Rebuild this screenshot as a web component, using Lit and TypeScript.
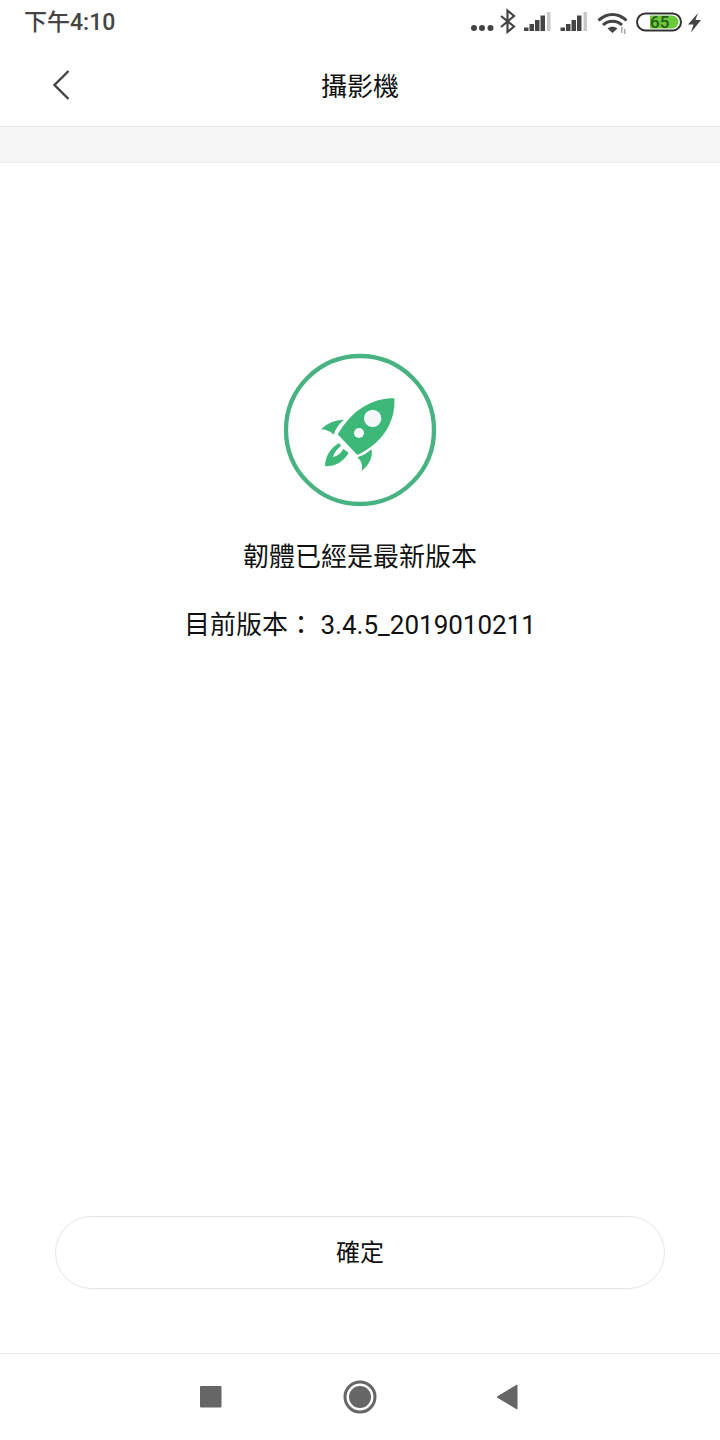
import { LitElement, html, css, svg } from "lit";
import { customElement } from "lit/decorators.js";

@customElement("app-root")
export class AppRoot extends LitElement {
  static styles = css`
    :host {
      display: block;
      width: 720px;
      height: 1440px;
      background: #fff;
      font-family: Roboto, "Noto Sans CJK TC", sans-serif;
      color: #111;
      overflow: hidden;
    }
    .page { display: flex; flex-direction: column; height: 1440px; }
    .status {
      height: 46px;
      display: flex;
      align-items: center;
      justify-content: space-between;
      padding: 0 0 0 24px;
      box-sizing: border-box;
    }
    .time { font-size: 23px; font-weight: 500; color: #444; line-height: 46px; }
    .status-icons { display: block; }
    .header {
      height: 80px;
      display: flex;
      align-items: center;
      justify-content: center;
      position: relative;
    }
    .back { position: absolute; left: 50px; top: 22px; }
    .title { font-size: 26px; line-height: 32px; color: #111; padding-top: 2px; }
    .band {
      height: 35px;
      background: #f6f6f6;
      border-top: 1px solid #e6e6e6;
      border-bottom: 1px solid #ececec;
    }
    .main {
      flex: 1;
      display: flex;
      flex-direction: column;
      align-items: center;
      padding-top: 187px;
      box-sizing: border-box;
    }
    .rocket { display: block; }
    .msg { margin-top: 17px; font-size: 26px; line-height: 60px; color: #111; }
    .ver { margin-top: 8px; font-size: 26px; line-height: 60px; color: #111; white-space: pre; }
    .spacer { flex: 1; }
    .btn {
      width: 610px;
      height: 73px;
      box-sizing: border-box;
      border: 1px solid #e4e4e4;
      border-radius: 37px;
      display: flex;
      align-items: center;
      justify-content: center;
      font-size: 24px;
      line-height: 30px;
      color: #111;
      background: #fff;
      margin-bottom: 64px;
    }
    .nav {
      height: 87px;
      border-top: 1px solid #ebebeb;
      box-sizing: border-box;
      display: flex;
      justify-content: center;
    }
  `;

  private statusIcons() {
    const signal = (x: number) => svg`
      <path d="M${x} 27.500h4.500v3.500h-4.500zM${x + 5.500} 24h4.500v7h-4.500zM${x + 11} 20h4.500v11h-4.500zM${x + 16.500} 15.500h4.500v15.500h-4.500z" fill="#444"/>
      <path d="M${x + 23} 12h3.500v19h-3.500z" fill="#c9c9c9"/>`;
    return html`<svg class="status-icons" width="250" height="46" viewBox="470 0 250 46">
      <g fill="#444">
        <circle cx="474" cy="28" r="3"/><circle cx="482" cy="28" r="3"/><circle cx="490.500" cy="28" r="3"/>
      </g>
      <path d="M501 16 L514 26.500 L507.500 32 V10.500 L514 16 L501 27" fill="none" stroke="#444" stroke-width="2.200"/>
      ${signal(524)}
      ${signal(560.5)}
      <g fill="none" stroke="#444" stroke-width="3">
        <path d="M598.500 20.500 C607 12.500 618 12.500 626.500 20.500"/>
        <path d="M603 25 C608.500 20 616.500 20 622 25"/>
      </g>
      <path d="M607.500 28.500 C610.500 26 614.500 26 617.500 28.500 L612.500 33 Z" fill="#444"/>
      <path d="M621 27h1.500v6H621zM624 29h1.500v5H624z" fill="#aaa"/>
      <rect x="637" y="13.500" width="44" height="17" rx="8.500" fill="#fff" stroke="#333" stroke-width="2"/>
      <path d="M650 15.500 H672 a6.500 6.500 0 0 1 0 13 H650 Z" fill="#6cc93a"/>
      <text x="650" y="28" font-family="Roboto, sans-serif" font-size="17" font-weight="500" fill="#245a14">65</text>
      <path d="M698 13 L688 24.500 H693.500 L691 32.500 L701 20 H695.500 Z" fill="#444"/>
    </svg>`;
  }

  render() {
    return html`<div class="page">
      <div class="status">
        <span class="time">下午4:10</span>
        ${this.statusIcons()}
      </div>
      <div class="header">
        <svg class="back" width="24" height="34" viewBox="0 0 24 34">
          <path d="M18.500 3 L4.500 17 L18.500 31" fill="none" stroke="#444" stroke-width="2.400"/>
        </svg>
        <span class="title">攝影機</span>
      </div>
      <div class="band"></div>
      <div class="main">
        <svg class="rocket" width="160" height="160" viewBox="30 30 480 480">
          <circle cx="270" cy="270" r="222" fill="none" stroke="#48b382" stroke-width="13"/>
          <path d="M373 175 C310 174 250 205 203 283 L262 345 C335 310 377 250 373 175 Z" fill="#3cb878"/>
          <circle cx="308" cy="235" r="26" fill="#f5f8fa"/>
          <circle cx="267" cy="279" r="15" fill="#f5f8fa"/>
          <path d="M153 268 C172 249 195 240 222 239 C205 253 196 268 191 284 C180 274 168 268 153 268 Z" fill="#3cb878"/>
          <path d="M262 352 C280 346 292 339 304 328 C310 350 298 375 275 393 C279 375 274 363 262 352 Z" fill="#3cb878"/>
          <path d="M207 309 C180 325 166 350 165 379 C197 379 220 365 236 339 L220 326 C214 338 205 347 189 351 C192 338 200 328 213 317 Z" fill="#3cb878"/>
        </svg>
        <div class="msg">韌體已經是最新版本</div>
        <div class="ver">目前版本： 3.4.5_2019010211</div>
        <div class="spacer"></div>
        <div class="btn">確定</div>
      </div>
      <div class="nav">
        <svg width="380" height="86" viewBox="170 1354 380 86">
          <rect x="200" y="1386" width="21.500" height="21.500" rx="1" fill="#666"/>
          <circle cx="360" cy="1397" r="15" fill="none" stroke="#666" stroke-width="3"/>
          <circle cx="360" cy="1397" r="11" fill="#666"/>
          <path d="M517 1385 V1409 L497 1397 Z" fill="#666" stroke="#666" stroke-width="1" stroke-linejoin="round"/>
        </svg>
      </div>
    </div>`;
  }
}
